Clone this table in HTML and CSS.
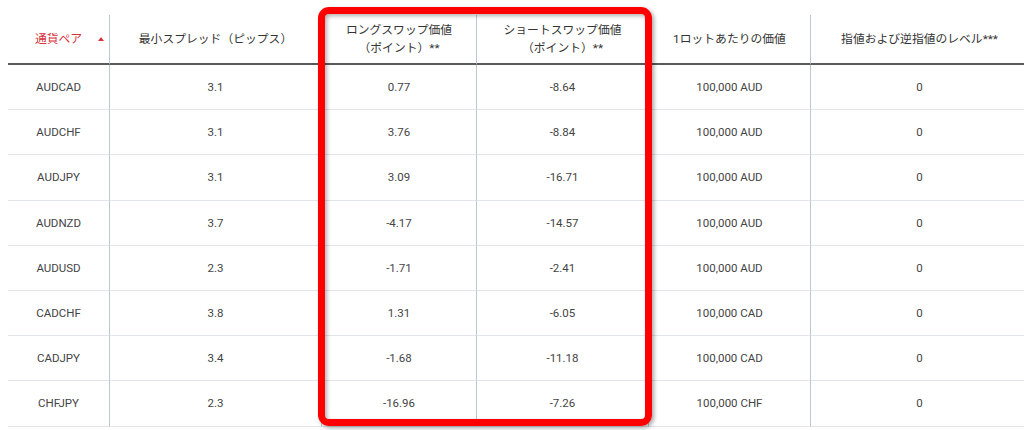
FILE: index.html
```html
<!DOCTYPE html>
<html lang="ja">
<head>
<meta charset="utf-8">
<link rel="stylesheet" href="styles.css">
</head>
<body>
<div class="page">
  <table class="swap">
    <colgroup>
      <col class="c1"><col class="c2"><col class="c3"><col class="c4"><col class="c5"><col class="c6">
    </colgroup>
    <thead>
      <tr>
        <th class="sorted">通貨ペア<span class="tri"></span></th>
        <th>最小スプレッド（ピップス）</th>
        <th>ロングスワップ価値<br>（ポイント）**</th>
        <th>ショートスワップ価値<br>（ポイント）**</th>
        <th>1ロットあたりの価値</th>
        <th>指値および逆指値のレベル***</th>
      </tr>
    </thead>
    <tbody>
      <tr><td>AUDCAD</td><td>3.1</td><td>0.77</td><td>-8.64</td><td>100,000 AUD</td><td>0</td></tr>
      <tr><td>AUDCHF</td><td>3.1</td><td>3.76</td><td>-8.84</td><td>100,000 AUD</td><td>0</td></tr>
      <tr><td>AUDJPY</td><td>3.1</td><td>3.09</td><td>-16.71</td><td>100,000 AUD</td><td>0</td></tr>
      <tr><td>AUDNZD</td><td>3.7</td><td>-4.17</td><td>-14.57</td><td>100,000 AUD</td><td>0</td></tr>
      <tr><td>AUDUSD</td><td>2.3</td><td>-1.71</td><td>-2.41</td><td>100,000 AUD</td><td>0</td></tr>
      <tr><td>CADCHF</td><td>3.8</td><td>1.31</td><td>-6.05</td><td>100,000 CAD</td><td>0</td></tr>
      <tr><td>CADJPY</td><td>3.4</td><td>-1.68</td><td>-11.18</td><td>100,000 CAD</td><td>0</td></tr>
      <tr><td>CHFJPY</td><td>2.3</td><td>-16.96</td><td>-7.26</td><td>100,000 CHF</td><td>0</td></tr>
    </tbody>
  </table>
  <div class="highlight"></div>
</div>
</body>
</html>
```
FILE: styles.css
```css
html, body {
  margin: 0;
  padding: 0;
  background: #fff;
  overflow: hidden;
}
.page {
  position: relative;
  width: 1024px;
  height: 430px;
  padding: 15px 0 0 8px;
  box-sizing: border-box;
  font-family: Roboto, "Noto Sans CJK JP", sans-serif;
}
.swap {
  border-collapse: separate;
  border-spacing: 0;
  table-layout: fixed;
  width: 1020px;
}
.c1 { width: 101px; }
.c2 { width: 212px; }
.c3 { width: 155px; }
.c4 { width: 172px; }
.c5 { width: 162px; }
.c6 { width: 218px; }
.swap th {
  height: 48px;
  padding: 0;
  font-family: Roboto, "Noto Sans CJK JP", sans-serif;
  font-weight: 400;
  font-size: 11.8px;
  line-height: 18px;
  color: #333;
  text-align: center;
  vertical-align: middle;
  border-bottom: 2px solid #5a5a5a;
}
.swap th + th,
.swap td + td {
  border-left: 1px solid #bcc7d3;
}
.swap th.sorted {
  position: relative;
  color: #d6333a;
}
.tri {
  position: absolute;
  right: 5px;
  top: 22px;
  width: 0;
  height: 0;
  border-left: 3px solid transparent;
  border-right: 3px solid transparent;
  border-bottom: 4px solid #d6333a;
}
.swap td {
  height: 44.2px;
  padding: 0;
  font-size: 11.5px;
  color: #444;
  text-align: center;
  vertical-align: middle;
  border-bottom: 1px solid #e1e4e9;
}
.highlight {
  position: absolute;
  left: 318px;
  top: 7px;
  width: 334px;
  height: 419px;
  box-sizing: border-box;
  border: 7px solid #ff0000;
  border-radius: 11px;
  box-shadow: 2px 2px 4px rgba(0, 0, 0, 0.35), inset 2px 2px 4px rgba(0, 0, 0, 0.3);
}
```
